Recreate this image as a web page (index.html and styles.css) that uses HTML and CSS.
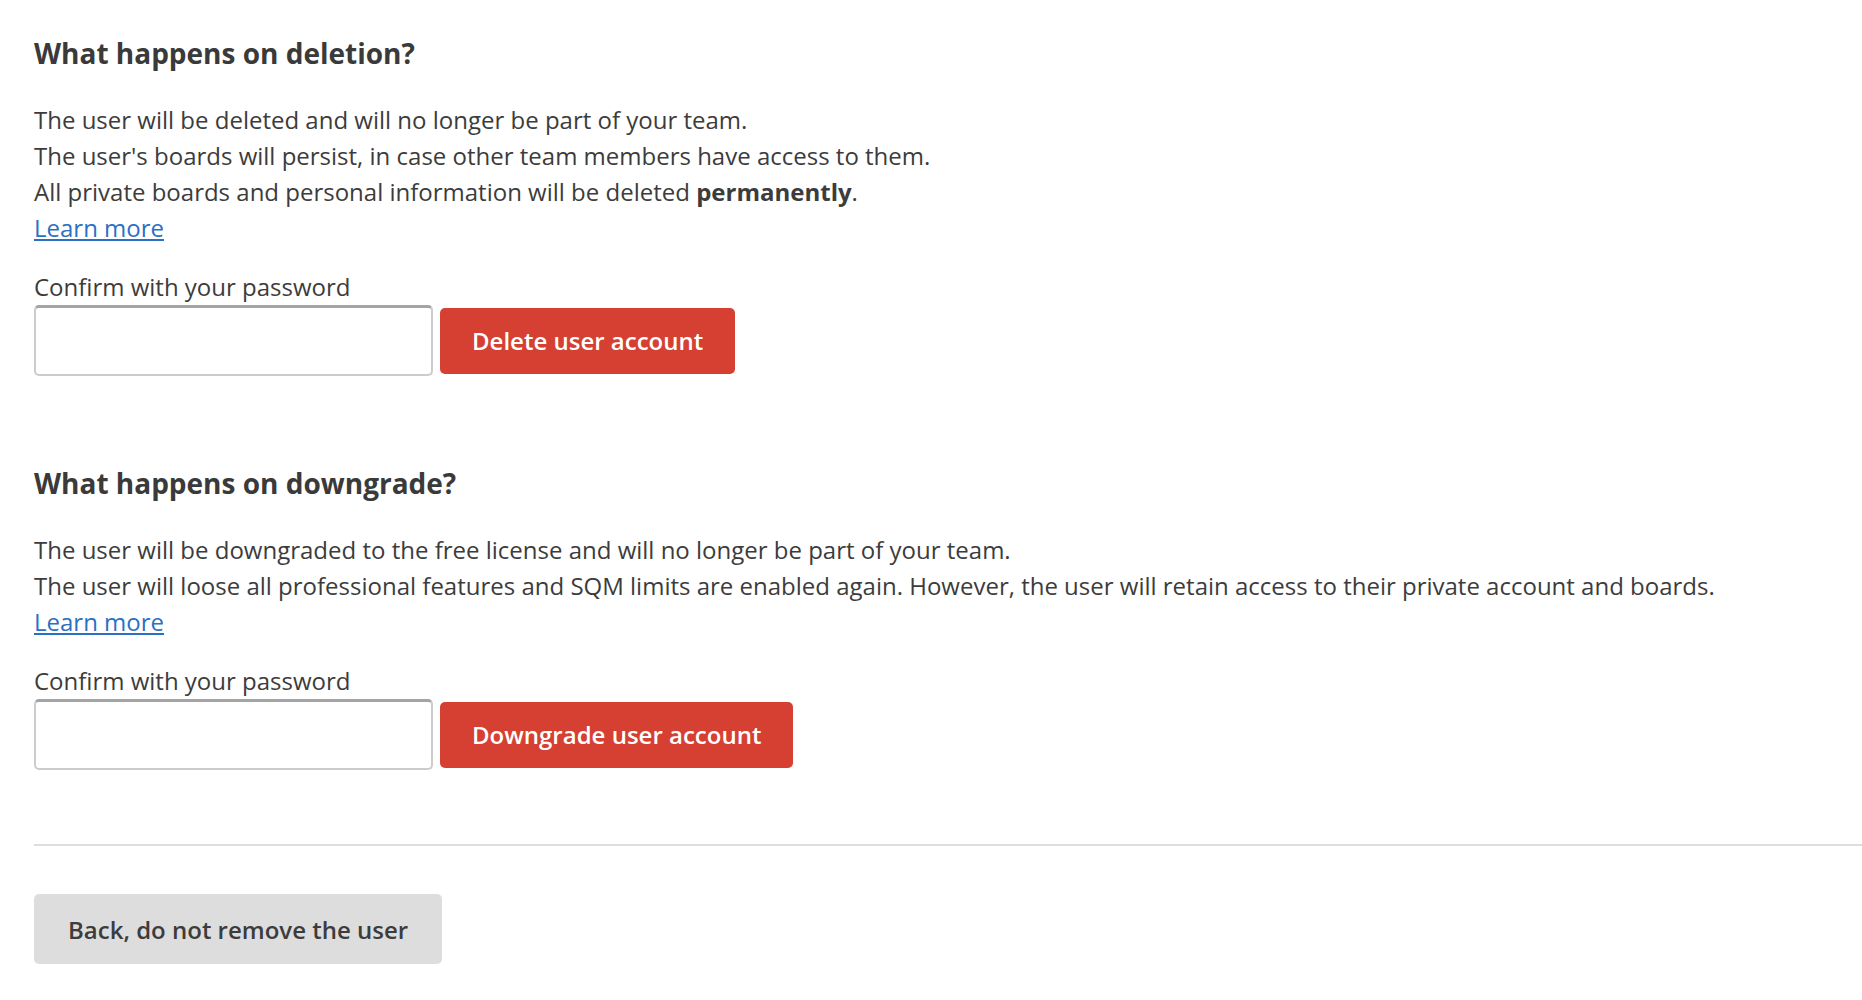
FILE: index.html
```html
<!DOCTYPE html>
<html lang="en">
<head>
<meta charset="utf-8">
<title>Remove user</title>
<link rel="stylesheet" href="styles.css">
</head>
<body>
<main class="page">
  <section class="section">
    <h2 class="title">What happens on deletion?</h2>
    <p class="text">The user will be deleted and will no longer be part of your team.<br>
    The user's boards will persist, in case other team members have access to them.<br>
    All private boards and personal information will be deleted <strong>permanently</strong>.<br>
    <a class="link" href="#">Learn more</a></p>
    <label class="label">Confirm with your password</label>
    <div class="row">
      <input class="input" type="password">
      <button class="btn btn-danger">Delete user account</button>
    </div>
  </section>
  <section class="section section-second">
    <h2 class="title">What happens on downgrade?</h2>
    <p class="text">The user will be downgraded to the free license and will no longer be part of your team.<br>
    The user will loose all professional features and SQM limits are enabled again. However, the user will retain access to their private account and boards.<br>
    <a class="link" href="#">Learn more</a></p>
    <label class="label">Confirm with your password</label>
    <div class="row">
      <input class="input" type="password">
      <button class="btn btn-danger">Downgrade user account</button>
    </div>
  </section>
  <hr class="divider">
  <div class="footer">
    <button class="btn btn-grey">Back, do not remove the user</button>
  </div>
</main>
</body>
</html>
```
FILE: styles.css
```css
html, body {
  margin: 0;
  padding: 0;
  background: #ffffff;
}
body {
  font-family: "Open Sans", "Liberation Sans", sans-serif;
  color: #3c3c3c;
  font-size: 24px;
  line-height: 36px;
}
.page {
  padding: 36px 0 0 34px;
}
.title {
  margin: 0 0 32px 0;
  font-size: 28px;
  line-height: 34px;
  font-weight: 700;
  color: #3a3a3a;
}
.text {
  margin: 0 0 23px 0;
}
.text strong {
  font-weight: 700;
}
.link {
  color: #2a70c4;
  text-decoration: underline;
}
.label {
  display: block;
}
.row {
  display: flex;
  align-items: center;
  gap: 7px;
}
.input {
  box-sizing: border-box;
  width: 399px;
  height: 71px;
  border: 2px solid #cccccc;
  border-top: 3px solid #a4a4a4;
  border-radius: 5px;
  background: #fff;
  margin: 0;
  padding: 0 12px;
  font-family: inherit;
  font-size: 24px;
}
.btn {
  font-family: "Open Sans", "Liberation Sans", sans-serif;
  font-size: 24px;
  font-weight: 600;
  border: none;
  border-radius: 5px;
  cursor: pointer;
  margin: 0;
}
.btn-danger {
  background: #d54032;
  color: #ffffff;
  height: 66px;
  padding: 0 32px;
}
.section-second {
  margin-top: 90px;
}
.divider {
  border: none;
  border-top: 2px solid #dedede;
  margin: 74px 0 0 0;
}
.footer {
  padding-top: 48px;
}
.btn-grey {
  background: #dddddd;
  color: #3c3c3c;
  height: 70px;
  padding: 0 34px;
}
```
